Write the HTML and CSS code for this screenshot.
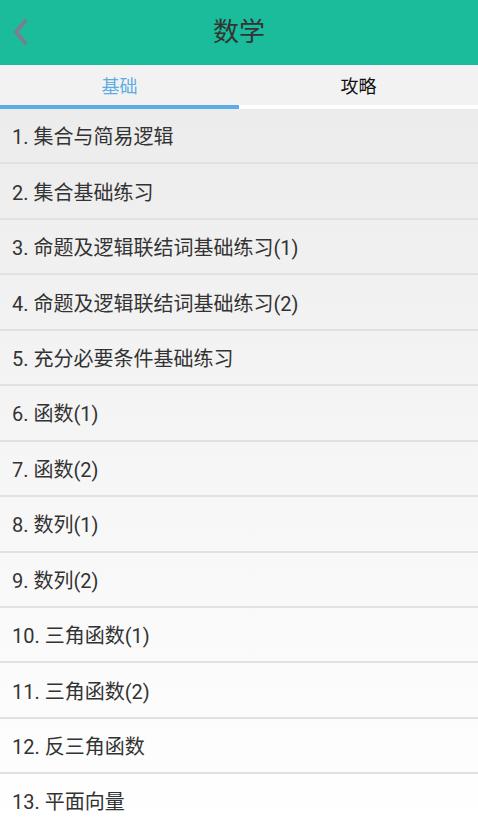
FILE: index.html
```html
<!DOCTYPE html>
<html lang="zh">
<head>
<meta charset="utf-8">
<title>数学</title>
<link rel="stylesheet" href="styles.css">
</head>
<body>
<div class="app">
  <header class="topbar">
    <span class="back">
      <svg width="20" height="30" viewBox="0 0 20 30"><path d="M13 3 L3 15 L13 27" fill="none" stroke="#7b7f8c" stroke-width="4" stroke-linecap="butt" stroke-linejoin="miter"/></svg>
    </span>
    <h1 class="title">数学</h1>
  </header>
  <nav class="tabs">
    <div class="tab active">基础</div>
    <div class="tab">攻略</div>
  </nav>
  <div class="indicator"><span class="bar"></span><span class="rest"></span></div>
  <ul class="list">
    <li>1. 集合与简易逻辑</li>
    <li>2. 集合基础练习</li>
    <li>3. 命题及逻辑联结词基础练习(1)</li>
    <li>4. 命题及逻辑联结词基础练习(2)</li>
    <li>5. 充分必要条件基础练习</li>
    <li>6. 函数(1)</li>
    <li>7. 函数(2)</li>
    <li>8. 数列(1)</li>
    <li>9. 数列(2)</li>
    <li>10. 三角函数(1)</li>
    <li>11. 三角函数(2)</li>
    <li>12. 反三角函数</li>
    <li>13. 平面向量</li>
  </ul>
</div>
</body>
</html>
```

FILE: styles.css
```css
html, body {
  margin: 0;
  padding: 0;
  height: 100%;
  overflow: hidden;
}
body {
  font-family: Roboto, "Noto Sans CJK SC", sans-serif;
  background: #ffffff;
}
.app {
  width: 478px;
  height: 817px;
  overflow: hidden;
  display: flex;
  flex-direction: column;
}
.topbar {
  height: 65px;
  background: #1abc9b;
  display: flex;
  align-items: center;
  justify-content: center;
  position: relative;
  flex: none;
}
.back {
  position: absolute;
  left: 13px;
  top: 17px;
  width: 20px;
  height: 30px;
}
.back svg { display: block; }
.title {
  margin: 0;
  font-size: 26px;
  font-weight: normal;
  color: #333333;
  line-height: 1;
  padding-bottom: 2px;
}
.tabs {
  height: 40px;
  background: #f2f2f2;
  display: flex;
  flex: none;
}
.tab {
  flex: 1;
  display: flex;
  align-items: center;
  justify-content: center;
  font-size: 18px;
  color: #111111;
}
.tab.active {
  color: #5cade6;
}
.indicator {
  height: 4px;
  display: flex;
  flex: none;
}
.indicator .bar {
  width: 239px;
  background: #5cade6;
}
.indicator .rest {
  flex: 1;
  background: #ffffff;
}
.list {
  list-style: none;
  margin: 0;
  padding: 0;
  flex: 1;
  background: linear-gradient(to bottom, #ececec 0%, #f5f5f5 45%, #ffffff 100%);
}
.list li {
  height: 53.45px;
  border-bottom: 2px solid #e1e1e1;
  display: flex;
  align-items: center;
  padding-left: 12px;
  font-size: 20px;
  color: #333333;
  white-space: nowrap;
}
```
